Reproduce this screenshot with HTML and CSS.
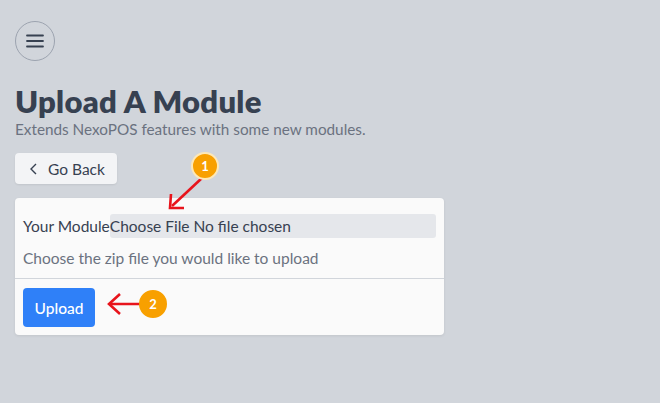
FILE: index.html
```html
<!DOCTYPE html>
<html>
<head>
<meta charset="utf-8">
<link rel="stylesheet" href="styles.css">
</head>
<body>
<div class="page">
  <button class="menu-btn" aria-label="menu">
    <svg width="18" height="14" viewBox="0 0 18 14"><path d="M1 1.5h16M1 7h16M1 12.5h16" stroke="#374151" stroke-width="1.8" stroke-linecap="round"/></svg>
  </button>
  <h1 class="title">Upload A Module</h1>
  <p class="subtitle">Extends NexoPOS features with some new modules.</p>
  <div class="back-row">
    <button class="back-btn">
      <svg width="10" height="12" viewBox="0 0 10 12"><path d="M7 1L2 6l5 5" fill="none" stroke="#374151" stroke-width="1.4"/></svg>
      <span>Go Back</span>
    </button>
  </div>
  <div class="card">
    <div class="card-body">
      <div class="field">
        <label class="label">Your Module</label>
        <div class="file-input">Choose File No file chosen</div>
      </div>
      <p class="help">Choose the zip file you would like to upload</p>
    </div>
    <div class="card-footer">
      <button class="upload-btn">Upload</button>
    </div>
  </div>

  <svg class="annot annot-1" width="60" height="60" viewBox="0 0 60 60">
    <path d="M50 16 L20 44" stroke="#e8141c" stroke-width="2.6" fill="none"/>
    <path d="M19 32 L18 46 L32 46" stroke="#e8141c" stroke-width="2.6" fill="none"/>
  </svg>
  <div class="badge badge-1">1</div>

  <svg class="annot annot-2" width="45" height="30" viewBox="0 0 45 30">
    <path d="M37 15 L4 15" stroke="#e8141c" stroke-width="2.6" fill="none"/>
    <path d="M14 5 L3 15 L14 25" stroke="#e8141c" stroke-width="2.6" fill="none"/>
  </svg>
  <div class="badge badge-2">2</div>
</div>
</body>
</html>
```
FILE: styles.css
```css
* { box-sizing: border-box; }
html, body { margin: 0; padding: 0; }
body {
  background: #d1d5db;
  font-family: "Lato", "Open Sans", sans-serif;
  color: #374151;
  width: 660px;
  height: 403px;
  overflow: hidden;
}
.page {
  position: relative;
  padding: 21px 15px 0 15px;
}
.menu-btn {
  width: 40px;
  height: 40px;
  border-radius: 50%;
  border: 1px solid #9ca3af;
  background: transparent;
  display: flex;
  align-items: center;
  justify-content: center;
  padding: 0;
}
.title {
  margin: 22px 0 0 0;
  font-size: 31px;
  font-weight: 800;
  line-height: 36px;
  color: #374151;
  letter-spacing: 0.3px;
}
.subtitle {
  margin: 0;
  font-size: 15.3px;
  line-height: 20px;
  color: #6b7280;
}
.back-row { margin-top: 14px; display: flex; }
.back-btn {
  height: 31px;
  width: 102px;
  display: flex;
  align-items: center;
  gap: 9px;
  padding: 0 12px 0 14px;
  background: #f3f4f6;
  border: none;
  border-radius: 4px;
  box-shadow: 0 1px 2px rgba(0,0,0,0.08);
  font-family: inherit;
  font-size: 15.5px;
  color: #374151;
}
.card {
  margin-top: 14px;
  width: 429px;
  background: #fafafa;
  border-radius: 4px;
  box-shadow: 0 1px 3px rgba(0,0,0,0.08);
}
.card-body { padding: 16px 8px 9px 8px; }
.field { display: flex; align-items: center; }
.label { font-size: 15.5px; color: #374151; }
.file-input {
  flex: 1;
  height: 24px;
  line-height: 24px;
  background: #e5e7eb;
  border-radius: 3px;
  font-size: 15.5px;
  color: #374151;
}
.help {
  margin: 9px 0 0 0;
  font-size: 15.5px;
  line-height: 22px;
  color: #6b7280;
}
.card-footer {
  border-top: 1px solid #d1d5db;
  padding: 9px 8px 8px 8px;
}
.upload-btn {
  width: 72px;
  height: 39px;
  background: #2f80f8;
  color: #fff;
  border: none;
  border-radius: 4px;
  font-family: inherit;
  font-size: 15.5px;
  font-weight: 500;
}
.annot { position: absolute; }
.annot-1 { left: 152px; top: 162px; }
.annot-2 { left: 106px; top: 289px; }
.badge {
  position: absolute;
  width: 28px;
  height: 28px;
  border-radius: 50%;
  background: #f8a000;
  border: 2px solid #fde8b8;
  color: #fff;
  font-size: 13px;
  font-weight: 700;
  display: flex;
  align-items: center;
  justify-content: center;
}
.badge-1 { left: 191px; top: 152px; }
.badge-2 { left: 139px; top: 290px; border-color: #f8a000; }
```
